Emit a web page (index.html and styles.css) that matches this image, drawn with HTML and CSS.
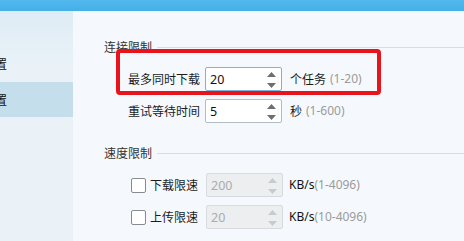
FILE: index.html
```html
<!DOCTYPE html>
<html lang="zh-CN">
<head>
<meta charset="utf-8">
<link rel="stylesheet" href="styles.css">
</head>
<body>
<div class="app">
  <div class="topbar"></div>
  <div class="body">
    <nav class="sidebar">
      <div class="nav-item"><span class="nav-text">常规设置</span></div>
      <div class="nav-item active"><span class="nav-text">下载设置</span></div>
    </nav>
    <main class="main">
      <div class="section-title"><span>连接限制</span></div>
      <div class="row">
        <label class="label">最多同时下载</label>
        <div class="spin focus">
          <span class="val">20</span>
          <span class="arrows">
            <svg width="9" height="5" viewBox="0 0 9 5"><path d="M4.5 0L9 5H0Z"/></svg>
            <svg width="9" height="5" viewBox="0 0 9 5"><path d="M0 0H9L4.5 5Z"/></svg>
          </span>
        </div>
        <span class="unit">个任务</span><span class="hint">(1-20)</span>
      </div>
      <div class="row">
        <label class="label">重试等待时间</label>
        <div class="spin">
          <span class="val">5</span>
          <span class="arrows">
            <svg width="9" height="5" viewBox="0 0 9 5"><path d="M4.5 0L9 5H0Z"/></svg>
            <svg width="9" height="5" viewBox="0 0 9 5"><path d="M0 0H9L4.5 5Z"/></svg>
          </span>
        </div>
        <span class="unit">秒</span><span class="hint">(1-600)</span>
      </div>

      <div class="section-title second"><span>速度限制</span></div>
      <div class="row">
        <span class="check"></span>
        <label class="label short">下载限速</label>
        <div class="spin disabled">
          <span class="val">200</span>
          <span class="arrows">
            <svg width="9" height="5" viewBox="0 0 9 5"><path d="M4.5 0L9 5H0Z"/></svg>
            <svg width="9" height="5" viewBox="0 0 9 5"><path d="M0 0H9L4.5 5Z"/></svg>
          </span>
        </div>
        <span class="unit kb">KB/s</span><span class="hint tight">(1-4096)</span>
      </div>
      <div class="row">
        <span class="check"></span>
        <label class="label short">上传限速</label>
        <div class="spin disabled">
          <span class="val">20</span>
          <span class="arrows">
            <svg width="9" height="5" viewBox="0 0 9 5"><path d="M4.5 0L9 5H0Z"/></svg>
            <svg width="9" height="5" viewBox="0 0 9 5"><path d="M0 0H9L4.5 5Z"/></svg>
          </span>
        </div>
        <span class="unit kb">KB/s</span><span class="hint tight">(10-4096)</span>
      </div>

      <div class="highlight"></div>
    </main>
  </div>
</div>
</body>
</html>
```

FILE: styles.css
```css
* { box-sizing: border-box; }
html, body { margin: 0; padding: 0; }
body {
  width: 464px;
  height: 241px;
  overflow: hidden;
  font-family: "Noto Sans CJK SC", "Noto Sans", sans-serif;
  font-size: 12px;
  color: #1c1c1c;
  background: #f5f9fd;
}
.app { display: flex; flex-direction: column; height: 241px; }
.topbar {
  height: 11px;
  background: linear-gradient(#52b8ee, #44b0e6);
  flex: none;
}
.body { display: flex; flex: 1; }
.sidebar {
  width: 73px;
  flex: none;
  background: linear-gradient(#dfecf5, #eaf2f8 60px);
  padding-top: 35px;
  overflow: hidden;
}
.nav-item {
  height: 36px;
  display: flex;
  align-items: center;
  white-space: nowrap;
  overflow: hidden;
}
.nav-item.active { background: #c4deec; height: 35px; }
.nav-text { margin-left: -41px; line-height: 14px; font-size: 12px; color: #111; }

.main {
  flex: 1;
  position: relative;
  padding: 28px 0 0 31px;
  display: flex;
  flex-direction: column;
}
.section-title {
  height: 16px;
  display: flex;
  align-items: center;
  gap: 5px;
  color: #333;
  line-height: 16px;
  margin-bottom: 12px;
}
.section-title::after {
  content: "";
  flex: 1;
  height: 1px;
  background: #d6dde3;
}
.section-title.second { margin-top: 14px; }

.row {
  display: flex;
  align-items: center;
  height: 24px;
  margin-left: 24px;
  margin-bottom: 8px;
}
.label { width: 77px; flex: none; line-height: 16px; }
.label.short { width: 56px; }
.check {
  width: 15px;
  height: 15px;
  margin: 0 4px 0 3px;
  border: 1px solid #868c92;
  border-radius: 2px;
  background: #fff;
  flex: none;
}
.spin {
  width: 77px;
  height: 24px;
  border: 1px solid #b3bcc4;
  border-radius: 2px;
  background: #fff;
  display: flex;
  align-items: center;
  justify-content: space-between;
  padding: 0 5px 0 4px;
  flex: none;
  font-family: "Noto Sans", "Open Sans", sans-serif;
  font-size: 12.5px;
  color: #111;
}
.spin.focus { border-color: #7fb2d8; }
.spin.disabled {
  background: #eceef0;
  border-color: #d7dbdf;
  color: #a9adb1;
}
.arrows {
  display: flex;
  flex-direction: column;
  gap: 6px;
  padding-top: 1px;
}
.arrows svg { display: block; fill: #6a6f74; }
.spin.disabled .arrows svg { fill: #c6cbd0; }

.unit { margin-left: 8px; line-height: 16px; }
.unit.kb { margin-left: 6px; font-family: "Noto Sans", "Open Sans", sans-serif; font-size: 12px; color: #111; }
.hint {
  margin-left: 4px;
  color: #9b9b9b;
  font-family: "Noto Sans", "Open Sans", sans-serif;
  font-size: 12px;
  line-height: 16px;
}
.hint.tight { margin-left: 0; }

.highlight {
  position: absolute;
  left: 43px;
  top: 38px;
  width: 265px;
  height: 46px;
  border: 4px solid #e8131b;
  border-radius: 4px;
  pointer-events: none;
}
```
